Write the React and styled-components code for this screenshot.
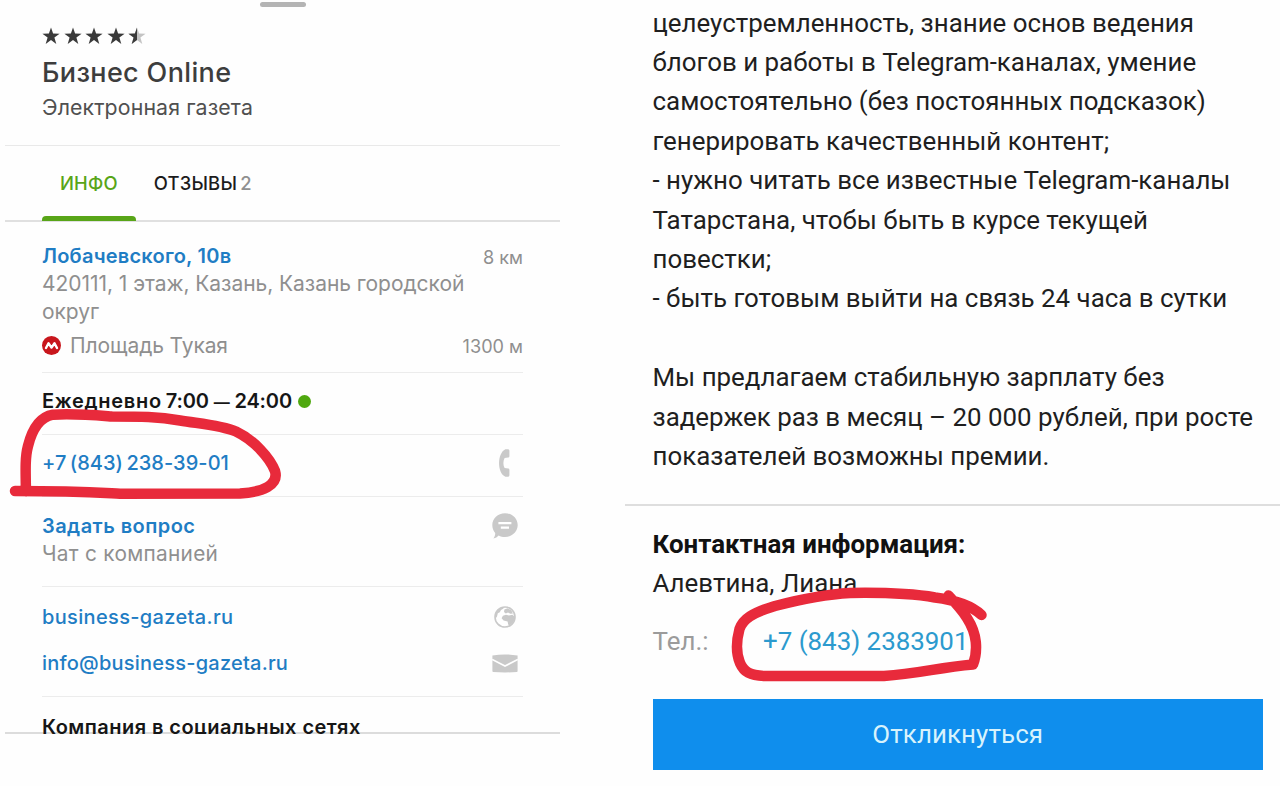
import React from "react";
import styled, { createGlobalStyle } from "styled-components";

const STAR = "M9 0.6 L11.1 6.6 L17.6 6.7 L12.4 10.5 L14.3 16.9 L9 13.1 L3.7 16.9 L5.6 10.5 L0.4 6.7 L6.9 6.6 Z";

const vacancy = [
  "целеустремленность, знание основ ведения",
  "блогов и работы в Telegram-каналах, умение",
  "самостоятельно (без постоянных подсказок)",
  "генерировать качественный контент;",
  "- нужно читать все известные Telegram-каналы",
  "Татарстана, чтобы быть в курсе текущей",
  "повестки;",
  "- быть готовым выйти на связь 24 часа в сутки",
];

const offer = [
  "Мы предлагаем стабильную зарплату без",
  "задержек раз в месяц – 20 000 рублей, при росте",
  "показателей возможны премии.",
];

const Star = ({ half }) => (
  <svg width="18" height="18" viewBox="0 0 18 18">
    <path d={STAR} fill={half ? "#c4c4c4" : "#3a3a3a"} />
    {half && (
      <path d="M9 0.6 L9 13.1 L3.7 16.9 L5.6 10.5 L0.4 6.7 L6.9 6.6 Z" fill="#3a3a3a" />
    )}
  </svg>
);

const MetroIcon = () => (
  <svg width="19" height="19" viewBox="0 0 19 19">
    <circle cx="9.5" cy="9.5" r="9.5" fill="#c8161c" />
    <path
      d="M4 12 L6.500 7.200 L9.5 11.600 L12.500 7.200 L15 12"
      fill="none"
      stroke="#fff"
      strokeWidth="2.4"
      strokeLinejoin="round"
      strokeLinecap="round"
    />
  </svg>
);

const PhoneIcon = () => (
  <svg width="26" height="28" viewBox="0 0 26 28">
    <path
      d="M13.4 0.2 L16.2 0.2 Q17.4 0.3 17.4 1.6 L17.4 7.2 Q17.4 8.4 16.2 8.5 L12.6 8.9 C11 12.2 11 15.8 12.6 19.1 L16.2 19.5 Q17.4 19.6 17.4 20.8 L17.4 26.2 Q17.4 27.6 16.2 27.7 L13.4 27.7 C5 24 5 4 13.4 0.2 Z"
      fill="#c9c9c9"
    />
  </svg>
);

const ChatIcon = () => (
  <svg width="26" height="26" viewBox="0 0 26 26">
    <path
      d="M13 0.3 C20.2 0.3 25.7 5.6 25.7 12.1 C25.7 18.7 20.2 24 13 24 C10.6 24 8.5 23.5 6.6 22.5 C5.3 24 3.6 25.1 1.4 25.5 C2.7 23.6 3.3 21.8 3.2 20 C1.3 17.9 0.3 15.1 0.3 12.1 C0.3 5.6 5.8 0.3 13 0.3 Z"
      fill="#c9c9c9"
    />
    <path d="M6.4 10.2 H19.4 M8.8 14.7 H17" stroke="#fff" strokeWidth="2.3" />
  </svg>
);

const GlobeIcon = () => (
  <svg width="22" height="22" viewBox="0 0 22 22">
    <circle cx="11" cy="11" r="10" fill="#fff" stroke="#c9c9c9" strokeWidth="1.6" />
    <path
      d="M1.2 11.5 C1 5.5 5 1.3 10.2 1 L9.2 2.8 L7 4.1 L5.8 6.3 L3.8 7.3 L3 10.4 L1.6 12.4 Z"
      fill="#c9c9c9"
    />
    <path
      d="M10.4 3.6 L13.6 2.2 L17.3 4.2 L18.9 7.4 L16.4 7.8 L14 6.4 L11.8 7.4 L10 6 Z"
      fill="#c9c9c9"
    />
    <path
      d="M8.9 9.8 L12 8.7 L15 9.4 L18.3 8.8 L21 11 C20.8 14.500 18.6 18 15.2 19.6 L14.2 18.6 L13.6 15.4 L9.6 14.4 L7.6 12.2 Z"
      fill="#c9c9c9"
    />
  </svg>
);

const MailIcon = () => (
  <svg width="26" height="19" viewBox="0 0 26 19">
    <path
      d="M0.4 1.6 Q13 -0.8 25.6 1.6 L25.6 17 Q25.6 17.9 24.7 18 Q13 18.9 1.3 18 Q0.4 17.9 0.4 17 Z"
      fill="#c9c9c9"
    />
    <path d="M0.2 5.4 L13 12 L25.8 5.4" fill="none" stroke="#fff" strokeWidth="1.7" />
  </svg>
);

const Marker = () => (
  <MarkerLayer width="1280" height="786" viewBox="0 0 1280 786">
    <path d="M26 491.5 C25.500 470 25 457 28 446 C32 430 40 417 53 414.700 C75 413.500 92 415 112 416.500 C140 416.500 158 416.500 180 420.500 C202 424 222 425.500 236 431.500 C254 440 270 458 275 471 C279 485 263 492 240 493.500 L120 493.800 C95 492.500 75 491 15 491" />
    <path d="M981.500 615 C972 606 955 600 935 597.500 C912 593.500 880 592.500 850 593 C822 594.500 800 599.500 775 606 C752 613 743 619 739.500 629 C736 642 735.500 652 740 663 C744 672 750 675.500 764 676 L884 676 C918 674 938 667.500 973 664.500 C976 657 976.500 650 975.800 642 C974 624 963 611 948.500 595.500" />
  </MarkerLayer>
);

const App = () => {
  return (
    <Page>
      <GlobalStyle />
      <Company>
        <Header>
          <Grabber />
          <Stars>
            <Star />
            <Star />
            <Star />
            <Star />
            <Star half />
          </Stars>
          <Name>Бизнес Online</Name>
          <Kind>Электронная газета</Kind>
        </Header>
        <Tabs>
          <Tab $active>ИНФО</Tab>
          <Tab>
            ОТЗЫВЫ <Count>2</Count>
          </Tab>
        </Tabs>
        <Info>
          <Section $height={151} $top={20}>
            <Line>
              <Link $bold $spacing={0.23}>Лобачевского, 10в</Link>
              <Distance>8 км</Distance>
            </Line>
            <Muted $size={21} $spacing={-0.05}>
              420111, 1 этаж, Казань, Казань городской округ
            </Muted>
            <Metro>
              <MetroIcon />
              <Muted $size={21} $spacing={-0.12}>Площадь Тукая</Muted>
              <Distance>1300 м</Distance>
            </Metro>
          </Section>
          <Section $height={62} $top={14}>
            <Hours>
              Ежедневно
              <Time>
                7:00 <Dash>—</Dash> 24:00
              </Time>
              <OpenDot />
            </Hours>
          </Section>
          <Section $height={62} $top={14}>
            <Line>
              <Link $spacing={0.05} $word={-2}>+7 (843) 238-39-01</Link>
              <IconBox>
                <PhoneIcon />
              </IconBox>
            </Line>
          </Section>
          <Section $height={90} $top={15}>
            <Line>
              <Link $bold $spacing={0.45}>Задать вопрос</Link>
              <IconBox>
                <ChatIcon />
              </IconBox>
            </Line>
            <Muted $size={20.8} $spacing={0.3}>Чат с компанией</Muted>
          </Section>
          <Section $height={110} $top={16}>
            <Line>
              <Link $spacing={0.34}>business-gazeta.ru</Link>
              <IconBox>
                <GlobeIcon />
              </IconBox>
            </Line>
            <Line $gap={18}>
              <Link $spacing={0.22}>info@business-gazeta.ru</Link>
              <IconBox>
                <MailIcon />
              </IconBox>
            </Line>
          </Section>
          <Social>Компания в социальных сетях</Social>
        </Info>
      </Company>
      <Vacancy>
        <Description>
          {vacancy.map((line) => (
            <p key={line}>{line}</p>
          ))}
          <br />
          {offer.map((line) => (
            <p key={line}>{line}</p>
          ))}
        </Description>
        <Contacts>
          <h3>Контактная информация:</h3>
          <p>Алевтина, Лиана</p>
          <Phone>
            <dt>Тел.:</dt>
            <dd>+7 (843) 2383901</dd>
          </Phone>
          <Reply>Откликнуться</Reply>
        </Contacts>
      </Vacancy>
      <Marker />
    </Page>
  );
};

const GlobalStyle = createGlobalStyle`
  * {
    margin: 0;
    padding: 0;
    box-sizing: border-box;
  }
  body {
    background: #fefefe;
    overflow: hidden;
  }
`;

const Page = styled.div`
  position: relative;
  display: flex;
  gap: 65px;
  height: 786px;
  padding-left: 5px;
`;

const Company = styled.div`
  width: 555px;
  height: 734px;
  overflow: hidden;
  box-shadow: inset 0 -2px #dcdcdc;
  font-family: Inter, "Liberation Sans", sans-serif;
`;

const Header = styled.header`
  height: 146px;
  padding: 2px 37px 0;
  border-bottom: 1px solid #e9e9e9;
`;

const Grabber = styled.div`
  width: 46px;
  height: 5px;
  margin: 0 auto;
  border-radius: 3px;
  background: #b4b4b4;
`;

const Stars = styled.div`
  display: flex;
  gap: 3.5px;
  margin: 20px 0 0;
  height: 18px;
`;

const Name = styled.h1`
  margin-top: 12px;
  font-size: 27px;
  font-weight: 500;
  line-height: 32px;
  letter-spacing: 0.35px;
  color: #3d3d3d;
`;

const Kind = styled.p`
  margin-top: 6px;
  font-size: 21.3px;
  line-height: 24px;
  letter-spacing: 0.12px;
  color: #505050;
`;

const Tabs = styled.nav`
  display: flex;
  height: 76px;
  padding-left: 37px;
  border-bottom: 2px solid #e0e0e0;
`;

const Tab = styled.div`
  height: 75px;
  padding: 0 18px;
  font-size: 18.4px;
  font-weight: 500;
  line-height: 74px;
  letter-spacing: 0.2px;
  color: ${(props) => (props.$active ? "#58a518" : "#1c1c1c")};

  &::after {
    content: "";
    display: block;
    height: 5px;
    margin: -4px -18px 0;
    border-radius: 4px 4px 0 0;
    background: ${(props) => (props.$active ? "#58a518" : "transparent")};
  }
`;

const Count = styled.span`
  margin-left: -2px;
  color: #909090;
`;

const Info = styled.div`
  padding: 0 37px;
`;

const Section = styled.section`
  height: ${(props) => props.$height}px;
  padding-top: ${(props) => props.$top}px;
  border-bottom: 1px solid #ececec;
`;

const Line = styled.div`
  display: flex;
  align-items: center;
  justify-content: space-between;
  height: 28px;
  margin-top: ${(props) => props.$gap || 0}px;
`;

const Link = styled.span`
  font-size: 20px;
  font-weight: ${(props) => (props.$bold ? 600 : 500)};
  letter-spacing: ${(props) => props.$spacing}px;
  word-spacing: ${(props) => props.$word || 0}px;
  color: #1f7dc4;
`;

const Muted = styled.p`
  font-size: ${(props) => props.$size}px;
  line-height: 28px;
  letter-spacing: ${(props) => props.$spacing || 0}px;
  color: #8f8f8f;
`;

const Distance = styled.span`
  margin-left: auto;
  padding-top: 1px;
  font-size: 18.1px;
  color: #8f8f8f;
`;

const Metro = styled.div`
  display: flex;
  align-items: center;
  gap: 9px;
  height: 29px;
  margin-top: 5px;
`;

const Hours = styled.p`
  display: flex;
  align-items: center;
  height: 28px;
  font-size: 20px;
  font-weight: 600;
  line-height: 28px;
  letter-spacing: 0.7px;
  color: #161616;
`;

const Time = styled.span`
  margin: 0 6px 0 4px;
  letter-spacing: -0.15px;
`;

const Dash = styled.span`
  font-size: 16px;
  line-height: 1;
`;

const OpenDot = styled.span`
  width: 13px;
  height: 13px;
  border-radius: 50%;
  background: #4fa80f;
`;

const IconBox = styled.span`
  display: flex;
  justify-content: center;
  width: 26px;
  margin-right: 5px;
`;

const Social = styled.p`
  padding-top: 16px;
  font-size: 20px;
  font-weight: 600;
  line-height: 28px;
  letter-spacing: 0.45px;
  color: #161616;
`;

const Vacancy = styled.div`
  flex: 1;
  font-family: Roboto, "Liberation Sans", sans-serif;
  font-size: 25.9px;
  line-height: 39.4px;
  color: #1f1f1f;
`;

const Description = styled.div`
  height: 506px;
  padding: 3.6px 0 0 27.5px;
  border-bottom: 2px solid #dedede;
  white-space: nowrap;
`;

const Contacts = styled.div`
  padding: 18.8px 17px 0 27.5px;
  h3 {
    font-size: inherit;
    font-weight: 700;
    color: #111;
  }
`;

const Phone = styled.dl`
  display: flex;
  margin-top: 18px;
  dt {
    width: 110.5px;
    color: #9b9b9b;
  }
  dd {
    color: #2c9ace;
  }
`;

const Reply = styled.button`
  display: block;
  width: 100%;
  height: 71px;
  margin-top: 38.2px;
  border: none;
  background: #0f8eed;
  font: inherit;
  letter-spacing: 0.1px;
  color: #d8f3fc;
`;

const MarkerLayer = styled.svg`
  position: absolute;
  top: 0;
  left: 0;
  pointer-events: none;
  fill: none;
  stroke: #e82a3b;
  stroke-width: 10.5px;
  stroke-linecap: round;
  stroke-linejoin: round;
`;

export default App;
